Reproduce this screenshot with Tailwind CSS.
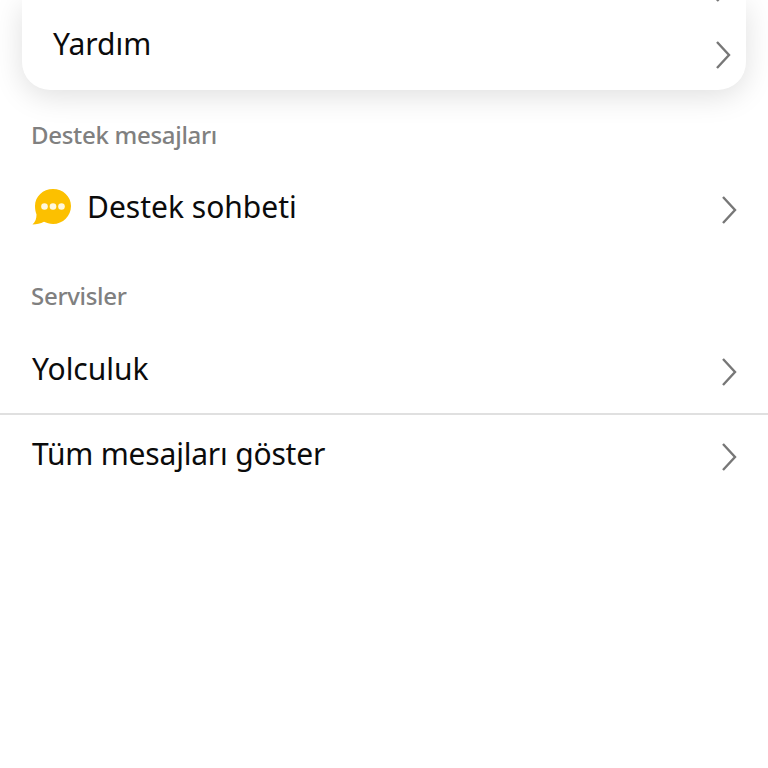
<!DOCTYPE html>
<html><head><meta charset="utf-8"><script src="https://cdn.jsdelivr.net/npm/@tailwindcss/browser@4"></script></head>
<body class="bg-white">
<div class="w-[768px] h-[768px] overflow-hidden bg-white font-['Noto_Sans',sans-serif] text-[#0b0b0b]">
  <section class="relative mx-[22px] h-[90px] rounded-b-[28px] bg-white shadow-[0_6px_30px_rgba(0,0,0,0.13)]">
    <svg class="absolute right-[14px] top-[-27px]" width="18" height="30" viewBox="0 0 18 30" fill="none"><path d="M3 2L15 15L3 28" stroke="#777" stroke-width="2.4"/></svg>
    <div class="flex h-[88px] pl-[31px] pr-[14px]">
      <span class="text-[30px] leading-[87px]">Yardım</span>
      <svg class="ml-auto mt-[40px]" width="18" height="30" viewBox="0 0 18 30" fill="none"><path d="M3 2L15 15L3 28" stroke="#777" stroke-width="2.4"/></svg>
    </div>
  </section>
  <h2 class="pl-[31px] pt-[30px] text-[24px] leading-[30px] font-medium tracking-[-0.3px] text-[#808080]">Destek mesajları</h2>
  <div class="flex items-center h-[84px] mt-[15px] pl-[32px] pr-[30px]">
    <svg class="shrink-0" width="40" height="38" viewBox="0 0 40 38"><path d="M21 1C31 1 39 8.500 39 18C39 28 31 36 21 36C17.500 36 14.500 35 12 33.800C8.500 35.500 4.500 36.500 0.500 36.500C3.500 33.500 4.500 30.500 4.500 26.500C3.500 24 3 21 3 18C3 8.500 11 1 21 1Z" fill="#fcc000"/><circle cx="12.500" cy="18.500" r="3.300" fill="#fff8dd"/><circle cx="21" cy="18.500" r="3.300" fill="#fff8dd"/><circle cx="29.500" cy="18.500" r="3.300" fill="#fff8dd"/></svg>
    <span class="ml-[15px] text-[30px] leading-[40px]">Destek sohbeti</span>
    <svg class="ml-auto mt-[5px]" width="18" height="30" viewBox="0 0 18 30" fill="none"><path d="M3 2L15 15L3 28" stroke="#777" stroke-width="2.4"/></svg>
  </div>
  <h2 class="pl-[31px] pt-[32px] text-[24px] leading-[30px] font-medium tracking-[-0.3px] text-[#808080]">Servisler</h2>
  <div class="flex items-center h-[88px] mt-[16px] pl-[32px] pr-[30px] border-b-2 border-[#e0e0e0]">
    <span class="mb-[3px] text-[30px] leading-[40px]">Yolculuk</span>
    <svg class="ml-auto mt-[4px]" width="18" height="30" viewBox="0 0 18 30" fill="none"><path d="M3 2L15 15L3 28" stroke="#777" stroke-width="2.4"/></svg>
  </div>
  <div class="flex items-center h-[78px] pl-[32px] pr-[30px]">
    <span class="text-[30px] leading-[40px] tracking-[-0.2px]">Tüm mesajları göster</span>
    <svg class="ml-auto mt-[5px]" width="18" height="30" viewBox="0 0 18 30" fill="none"><path d="M3 2L15 15L3 28" stroke="#777" stroke-width="2.4"/></svg>
  </div>
</div>
</body></html>
